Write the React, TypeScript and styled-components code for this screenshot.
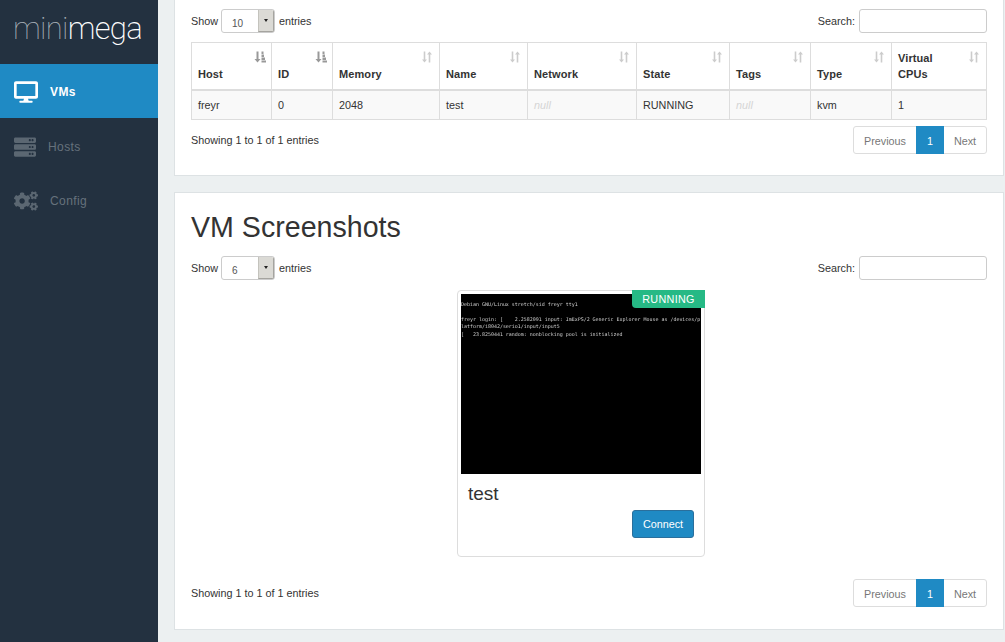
import React from 'react';
import styled, { createGlobalStyle } from 'styled-components';
import { FaCogs, FaDesktop, FaServer } from 'react-icons/fa';

const GlobalStyle = createGlobalStyle`
	html, body {
		margin: 0;
		height: 642px;
		overflow: hidden;
		background: #ecf0f1;
		font-family: 'Liberation Sans', Arial, sans-serif;
		font-size: 10.8px;
		color: #333;
	}
	* {
		box-sizing: border-box;
	}
`;

const columns = [
	{ title: 'Host', width: 80, value: 'freyr', sorted: true },
	{ title: 'ID', width: 61, value: '0', sorted: true },
	{ title: 'Memory', width: 107, value: '2048' },
	{ title: 'Name', width: 88, value: 'test' },
	{ title: 'Network', width: 109, value: 'null', empty: true },
	{ title: 'State', width: 93, value: 'RUNNING' },
	{ title: 'Tags', width: 81, value: 'null', empty: true },
	{ title: 'Type', width: 81, value: 'kvm' },
	{ title: 'Virtual CPUs', width: 95, value: '1' },
];

const bootLog = [
	'Debian GNU/Linux stretch/sid freyr tty1',
	'\u00a0',
	'freyr login: [    2.2582091 input: ImExPS/2 Generic Explorer Mouse as /devices/p',
	'latform/i8042/serio1/input/input5',
	'[   23.8250441 random: nonblocking pool is initialized',
];

const SortIcon = ({ sorted }: { sorted?: boolean }) =>
	sorted ? (
		<SortSvg viewBox="0 0 12 12" $sorted>
			<path d="M2.5 0.5h2v7.5h2l-3 3.5-3-3.5h2z" />
			<path d="M7.5 0.5h2v2.5h-2zM7.5 3.5h2.5v2.5h-2.5zM7.5 6.5h3.5v2.5h-3.5zM7.5 9.5h4.5v2h-4.5z" />
		</SortSvg>
	) : (
		<SortSvg viewBox="0 0 10 12">
			<path d="M1.7 0.5h1.6v8h1.7l-2.5 3-2.5-3h1.7z" />
			<path d="M7.5 0.5l2.5 3h-1.7v8h-1.6v-8h-1.7z" />
		</SortSvg>
	);

const Pagination = () => (
	<Pager>
		<PageButton $width={62}>Previous</PageButton>
		<PageButton $width={28} $active>
			1
		</PageButton>
		<PageButton $width={42}>Next</PageButton>
	</Pager>
);

const TableControls = ({ size }: { size: number }) => (
	<Controls>
		<Label>
			Show
			<FakeSelect>
				<SelectValue>{size}</SelectValue>
				<SelectArrow />
			</FakeSelect>
			entries
		</Label>
		<Label>
			Search:
			<SearchInput />
		</Label>
	</Controls>
);

export default function App() {
	return (
		<Page>
			<GlobalStyle />
			<Sidebar>
				<Logo>
					<LogoThin>mini</LogoThin>mega
				</Logo>
				<NavItem $active $gap={12}>
					<FaDesktop />
					VMs
				</NavItem>
				<NavItem $gap={12} $iconSize={22}>
					<FaServer />
					Hosts
				</NavItem>
				<NavItem $gap={12}>
					<FaCogs />
					Config
				</NavItem>
			</Sidebar>
			<Main>
				<TopPanel>
					<TableControls size={10} />
					<VmTable>
						<colgroup>
							{columns.map((c) => (
								<col key={c.title} width={c.width} />
							))}
						</colgroup>
						<thead>
							<tr>
								{columns.map((c) => (
									<HeadCell key={c.title}>
										<HeadText>{c.title}</HeadText>
										<SortIcon sorted={c.sorted} />
									</HeadCell>
								))}
							</tr>
						</thead>
						<tbody>
							<tr>
								{columns.map((c) => (
									<BodyCell key={c.title} $empty={c.empty}>
										{c.value}
									</BodyCell>
								))}
							</tr>
						</tbody>
					</VmTable>
					<Footer>
						<FooterInfo>Showing 1 to 1 of 1 entries</FooterInfo>
						<Pagination />
					</Footer>
				</TopPanel>
				<ShotsPanel>
					<Heading>VM Screenshots</Heading>
					<TableControls size={6} />
					<CardRow>
						<Card>
							<Badge>RUNNING</Badge>
							<Screen>
								{bootLog.map((line, i) => (
									<ScreenLine key={i}>{line}</ScreenLine>
								))}
							</Screen>
							<CardName>test</CardName>
							<CardActions>
								<ConnectButton>Connect</ConnectButton>
							</CardActions>
						</Card>
					</CardRow>
					<Footer>
						<FooterInfo>Showing 1 to 1 of 1 entries</FooterInfo>
						<Pagination />
					</Footer>
				</ShotsPanel>
			</Main>
		</Page>
	);
}

const Page = styled.div`
	display: flex;
	height: 642px;
	overflow: hidden;
`;

const Sidebar = styled.nav`
	width: 158px;
	flex-shrink: 0;
	background: #233140;
	display: flex;
	flex-direction: column;
`;

const Logo = styled.div`
	height: 64px;
	padding: 7px 0 0 13px;
	font-family: Roboto, sans-serif;
	font-weight: 200;
	font-size: 31px;
	line-height: 44px;
	letter-spacing: -0.7px;
	color: #fff;
`;

const LogoThin = styled.span`
	font-weight: 100;
	color: #aab2b9;
`;

const NavItem = styled.div<{ $active?: boolean; $gap: number; $iconSize?: number }>`
	height: 54px;
	display: flex;
	align-items: center;
	gap: ${(p) => p.$gap}px;
	padding: ${(p) => (p.$active ? '1px' : '3px')} 0 0 14px;
	font-size: 12px;
	letter-spacing: 0.4px;
	font-weight: ${(p) => (p.$active ? 'bold' : 'normal')};
	color: ${(p) => (p.$active ? '#fff' : '#66717c')};
	background: ${(p) => (p.$active ? '#1f8ac4' : 'transparent')};

	svg {
		width: ${(p) => p.$iconSize || 24}px;
		height: ${(p) => p.$iconSize || 24}px;
		color: ${(p) => (p.$active ? '#fff' : '#5b6772')};
	}
`;

const Main = styled.main`
	flex: 1;
	min-width: 0;
	padding-left: 16px;
	padding-right: 1px;
	display: flex;
	flex-direction: column;
	gap: 16px;
`;

const TopPanel = styled.section`
	height: 176px;
	padding: 9px 16px 0;
	background: #fff;
	border: 1px solid #dde2e4;
	border-top: none;
`;

const ShotsPanel = styled.section`
	height: 438px;
	padding: 0 16px;
	background: #fff;
	border: 1px solid #dde2e4;
`;

const Heading = styled.h1`
	margin: 0;
	padding-top: 17px;
	height: 63px;
	font-weight: normal;
	font-size: 28.6px;
	line-height: 34px;
	color: #333;
`;

const Controls = styled.div`
	display: flex;
	justify-content: space-between;
	height: 24px;
`;

const Label = styled.div`
	display: flex;
	align-items: center;
	gap: 3px;
	height: 24px;
`;

const FakeSelect = styled.div`
	width: 54px;
	height: 24px;
	margin-right: 1px;
	display: flex;
	justify-content: space-between;
	background: #fff;
	border: 1px solid #ccc;
	border-radius: 3px;
	overflow: hidden;
`;

const SelectValue = styled.span`
	padding: 8px 0 0 10px;
	font-size: 10px;
	line-height: 12px;
	color: #555;
`;

const SelectArrow = styled.span`
	width: 16px;
	display: flex;
	align-items: center;
	justify-content: center;
	background: #dbdad5;
	border-left: 1px solid #c4c3bd;
	border-bottom: 1px solid #a5a49f;
	border-right: 1px solid #a5a49f;

	&::after {
		content: '';
		border: 2.5px solid transparent;
		border-top: 3px solid #222;
		border-bottom: none;
	}
`;

const SearchInput = styled.div`
	width: 128px;
	height: 24px;
	margin-left: 1px;
	background: #fff;
	border: 1px solid #ccc;
	border-radius: 3px;
`;

const VmTable = styled.table`
	width: 795px;
	margin-top: 9px;
	table-layout: fixed;
	border-collapse: collapse;
`;

const HeadCell = styled.th`
	position: relative;
	height: 47px;
	padding: 0 24px 7px 6px;
	text-align: left;
	vertical-align: bottom;
	border: 1px solid #ddd;
	border-bottom: 2px solid #ddd;
	line-height: 16px;
	font-size: 11px;
`;

const HeadText = styled.span`
	font-weight: bold;
	letter-spacing: 0.1px;
`;

const SortSvg = styled.svg<{ $sorted?: boolean }>`
	position: absolute;
	top: 8px;
	right: ${(p) => (p.$sorted ? 5 : 7)}px;
	width: ${(p) => (p.$sorted ? 12 : 10)}px;
	height: 12px;
	fill: ${(p) => (p.$sorted ? '#999' : '#ccc')};
`;

const BodyCell = styled.td<{ $empty?: boolean }>`
	height: 30px;
	padding: 0 6px;
	background: #f9f9f9;
	border: 1px solid #ddd;
	font-style: ${(p) => (p.$empty ? 'italic' : 'normal')};
	color: ${(p) => (p.$empty ? '#d5d5d5' : '#333')};
`;

const Footer = styled.div`
	display: flex;
	justify-content: space-between;
	align-items: flex-start;
	margin-top: 6px;
`;

const FooterInfo = styled.div`
	padding-top: 8px;
`;

const Pager = styled.div`
	display: flex;
	height: 28px;
	border: 1px solid #ddd;
	border-radius: 3px;
`;

const PageButton = styled.span<{ $active?: boolean; $width: number }>`
	display: flex;
	align-items: center;
	justify-content: center;
	width: ${(p) => p.$width}px;
	margin: -1px 0;
	padding-top: 1px;
	color: ${(p) => (p.$active ? '#fff' : '#777')};
	background: ${(p) => (p.$active ? '#1f8ac4' : 'transparent')};
`;

const CardRow = styled.div`
	display: flex;
	justify-content: center;
	padding: 10px 16px 0 0;
	height: 293px;
`;

const Card = styled.article`
	position: relative;
	width: 248px;
	height: 267px;
	padding: 3px;
	background: #fff;
	border: 1px solid #ddd;
	border-radius: 4px;
`;

const Badge = styled.div`
	position: absolute;
	z-index: 1;
	top: -1px;
	right: -1px;
	width: 73px;
	height: 18px;
	background: #26b985;
	border-bottom-left-radius: 4px;
	color: #fff;
	text-align: center;
	line-height: 18px;
	letter-spacing: 0.3px;
`;

const Screen = styled.div`
	width: 240px;
	height: 180px;
	padding-top: 7px;
	overflow: hidden;
	background: #000;
	color: #d0d0d0;
	font-family: 'DejaVu Sans Mono', monospace;
	font-size: 4.98px;
	line-height: 7.4px;
	filter: blur(0.3px);
`;

const ScreenLine = styled.div`
	width: fit-content;
	white-space: pre;
`;

const CardName = styled.div`
	padding: 9px 0 0 7px;
	font-size: 19px;
	line-height: 22px;
`;

const CardActions = styled.div`
	display: flex;
	justify-content: flex-end;
	margin: 5px 7px 0 0;
`;

const ConnectButton = styled.button`
	width: 62px;
	height: 28px;
	padding: 0;
	background: #1f8ac4;
	border: 1px solid #2a6f9c;
	border-radius: 3px;
	color: #fff;
	font-family: inherit;
	font-size: 10.8px;
`;
